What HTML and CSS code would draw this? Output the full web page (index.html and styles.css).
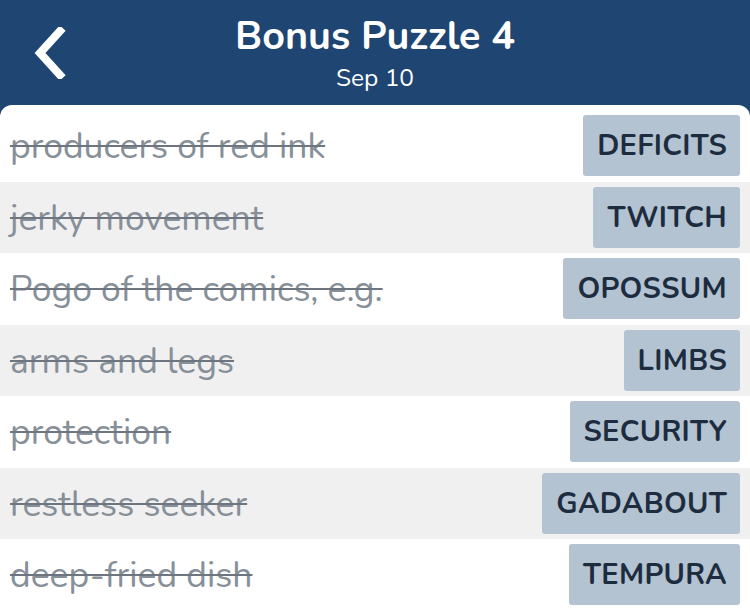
FILE: index.html
```html
<!DOCTYPE html>
<html>
<head>
<meta charset="utf-8">
<link rel="stylesheet" href="styles.css">
</head>
<body>
<header class="header">
  <button class="back" aria-label="Back">
    <svg width="36" height="52" viewBox="0 0 36 52"><path d="M28 4 L8 26 L28 48" fill="none" stroke="#fff" stroke-width="8" stroke-linecap="square" stroke-linejoin="miter"/></svg>
  </button>
  <div class="titles">
    <h1 class="title">Bonus Puzzle 4</h1>
    <div class="date">Sep 10</div>
  </div>
</header>
<main class="card">
  <div class="row"><span class="clue">producers of red ink</span><span class="answer">DEFICITS</span></div>
  <div class="row alt"><span class="clue">jerky movement</span><span class="answer">TWITCH</span></div>
  <div class="row"><span class="clue">Pogo of the comics, e.g.</span><span class="answer">OPOSSUM</span></div>
  <div class="row alt"><span class="clue">arms and legs</span><span class="answer">LIMBS</span></div>
  <div class="row"><span class="clue">protection</span><span class="answer">SECURITY</span></div>
  <div class="row alt"><span class="clue">restless seeker</span><span class="answer">GADABOUT</span></div>
  <div class="row"><span class="clue">deep-fried dish</span><span class="answer">TEMPURA</span></div>
</main>
</body>
</html>
```
FILE: styles.css
```css
* { box-sizing: border-box; }
html, body { margin: 0; padding: 0; }
body {
  background: #1f4672;
  font-family: "Nunito", "Lato", "Noto Sans", sans-serif;
  width: 750px;
  height: 610px;
  overflow: hidden;
}
.header {
  height: 105px;
  position: relative;
  display: flex;
  justify-content: center;
  align-items: flex-start;
  color: #fff;
}
.back {
  position: absolute;
  left: 32px;
  top: 27px;
  background: none;
  border: 0;
  padding: 0;
  cursor: pointer;
}
.titles {
  display: flex;
  flex-direction: column;
  align-items: center;
  padding-top: 12px;
}
.title {
  margin: 0;
  font-size: 39.5px;
  font-weight: 700;
  line-height: 48px;
}
.date {
  font-size: 24.5px;
  line-height: 28px;
  margin-top: 4px;
}
.card {
  background: #fff;
  border-radius: 12px 12px 0 0;
  padding-top: 5px;
  height: 505px;
  overflow: hidden;
}
.row {
  height: 71.5px;
  display: flex;
  align-items: center;
  justify-content: space-between;
  padding: 0 10px 0 10px;
}
.row.alt { background: #f0f0f0; }
.clue {
  font-size: 35.5px;
  color: #878f98;
  text-decoration: line-through;
  text-decoration-thickness: 2px;
  text-decoration-color: #6c7580;
  white-space: nowrap;
  padding-top: 2px;
}
.answer {
  background: #b3c3d1;
  color: #1d2c3e;
  font-weight: 700;
  font-size: 29px;
  height: 61px;
  display: flex;
  align-items: center;
  padding: 0 13px 0 14px;
  border-radius: 3px;
  letter-spacing: 0.3px;
}
```
